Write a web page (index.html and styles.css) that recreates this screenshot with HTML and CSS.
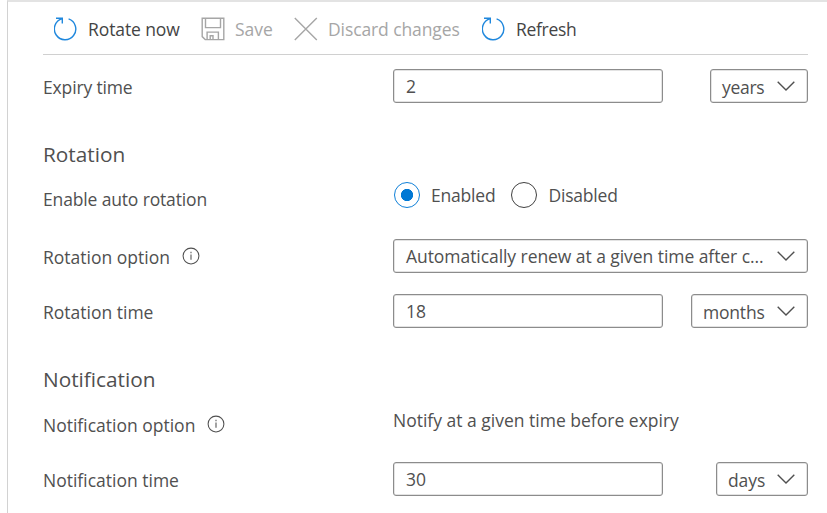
FILE: index.html
```
<!DOCTYPE html>
<html lang="en">
<head>
<meta charset="utf-8">
<title>Rotation policy</title>
<link rel="stylesheet" href="styles.css">
</head>
<body>
<svg width="0" height="0" class="defs" aria-hidden="true">
  <symbol id="rotate" viewBox="0 0 24 24"><path d="M8.2 1.7A10.7 10.7 0 1 0 14.6 1.9M2 1.2h6.3v5.4"/></symbol>
  <symbol id="chevron" viewBox="0 0 18 10"><path d="M.7.7 9 9 17.3.7"/></symbol>
  <symbol id="info" viewBox="0 0 18 18"><circle cx="9" cy="9" r="7.9"/><path d="M9 7.6v5.2M9 4.8v1.4"/></symbol>
</svg>
<main class="panel">
  <div class="toolbar">
    <button class="command rotate"><svg class="icon blue"><use href="#rotate"/></svg><span>Rotate now</span></button>
    <button class="command save" disabled><svg class="icon" viewBox="0 0 24 24"><path d="M1.2 1.2h21.6v21.4H4.2l-3-3zM4.5 1.2v9.4h15V1.2M6.1 22.6v-7.5h11.3v7.5M9.2 22.6v-3.8h2.8v3.8"/></svg><span>Save</span></button>
    <button class="command discard" disabled><svg class="icon" viewBox="0 0 24 24"><path d="M.8 1l22 22M22.8 1 .8 23"/></svg><span>Discard changes</span></button>
    <button class="command refresh"><svg class="icon blue"><use href="#rotate"/></svg><span>Refresh</span></button>
  </div>
  <div class="form">
    <div class="row expiry">
      <span class="label tight">Expiry time</span>
      <div class="fields"><div class="box input">2</div><div class="box select years">years<svg class="chevron"><use href="#chevron"/></svg></div></div>
    </div>
    <h2>Rotation</h2>
    <div class="row enable">
      <span class="label tight">Enable auto rotation</span>
      <div class="fields radios">
        <span class="radio checked"></span><span>Enabled</span>
        <span class="radio"></span><span>Disabled</span>
      </div>
    </div>
    <div class="row option">
      <span class="label">Rotation option<svg class="info"><use href="#info"/></svg></span>
      <div class="fields"><div class="box select wide">Automatically renew at a given time after c...<svg class="chevron"><use href="#chevron"/></svg></div></div>
    </div>
    <div class="row time">
      <span class="label">Rotation time</span>
      <div class="fields"><div class="box input">18</div><div class="box select months">months<svg class="chevron"><use href="#chevron"/></svg></div></div>
    </div>
    <h2>Notification</h2>
    <div class="row notify">
      <span class="label">Notification option<svg class="info"><use href="#info"/></svg></span>
      <div class="fields text">Notify at a given time before expiry</div>
    </div>
    <div class="row time">
      <span class="label">Notification time</span>
      <div class="fields"><div class="box input">30</div><div class="box select days">days<svg class="chevron"><use href="#chevron"/></svg></div></div>
    </div>
  </div>
</main>
</body>
</html>
```
FILE: styles.css
```
* { box-sizing: border-box; }
body {
  margin: 0;
  height: 513px;
  overflow: hidden;
  background: #fff;
  color: #505050;
  font: 17.5px/24px "Open Sans", "Noto Sans", sans-serif;
}
.defs { display: block; }
svg { fill: none; stroke: currentColor; flex: none; }
.panel {
  margin-left: 7px;
  height: 513px;
  padding: 0 19px 0 35px;
  border-left: 1px solid #d2d2d2;
  border-top: 2px solid #e3e3e3;
}
.toolbar {
  display: flex;
  height: 53px;
  padding-left: 11px;
  border-bottom: 1px solid #d0d0d0;
}
.command {
  display: flex;
  align-items: center;
  padding: 2px 0 0;
  border: 0;
  background: none;
  color: #444;
  font: inherit;
  letter-spacing: -.1px;
  white-space: nowrap;
}
.command:disabled { color: #a6a6a6; }
.icon { width: 24px; height: 24px; stroke-width: 1.4; }
.command .blue { color: #2088dd; }
.command span { margin-left: 10px; }
.rotate { width: 147px; }
.save { width: 93px; }
.save span { letter-spacing: 0; }
.discard { width: 188px; }
.refresh span { letter-spacing: -.3px; }
.form { padding-top: 14px; }
.row { display: flex; height: 34px; }
.label {
  display: flex;
  align-items: center;
  width: 350px;
  padding-top: 1px;
}
.tight { letter-spacing: -.15px; }
.fields { display: flex; flex: 1; justify-content: space-between; align-items: center; }
.box {
  display: flex;
  align-items: center;
  height: 34px;
  border: 1px solid #8c8c8c;
  border-radius: 3px;
  box-shadow: inset 0 0 0 .5px #c8c8c8;
  padding: 0 12px;
}
.input { width: 270px; padding-bottom: 1px; }
.select { padding: 1px 12px 0 11px; justify-content: space-between; }
.years { width: 98px; letter-spacing: -.3px; }
.months { width: 117px; letter-spacing: -.2px; }
.days { width: 92px; letter-spacing: -.1px; }
.wide { width: 100%; padding-left: 12px; padding-bottom: 1px; letter-spacing: -.06px; white-space: nowrap; }
.chevron { width: 18px; height: 10px; stroke-width: 1.4; margin-top: -1px; }
.info { width: 18px; height: 18px; margin: -1px 0 0 12px; stroke-width: 1.05; }
h2 {
  margin: 34px 0 0;
  font-size: 20.8px;
  line-height: 34px;
  font-weight: 400;
}
.enable { margin-top: 10px; }
.radios { justify-content: flex-start; padding: 0 0 7px 1px; }
.radio {
  width: 26px;
  height: 26px;
  margin-right: 11px;
  border: 1.5px solid #404040;
  border-radius: 50%;
}
.radios span { letter-spacing: -.2px; }
.checked { border-color: #0f80d8; background: radial-gradient(circle, #0078d4 5.8px, transparent 6.4px); }
span + .radio { margin-left: 16px; }
.option { margin-top: 24px; }
.time { margin-top: 21px; }
.notify { margin-top: 11px; }
.text { padding-bottom: 9px; }
```
